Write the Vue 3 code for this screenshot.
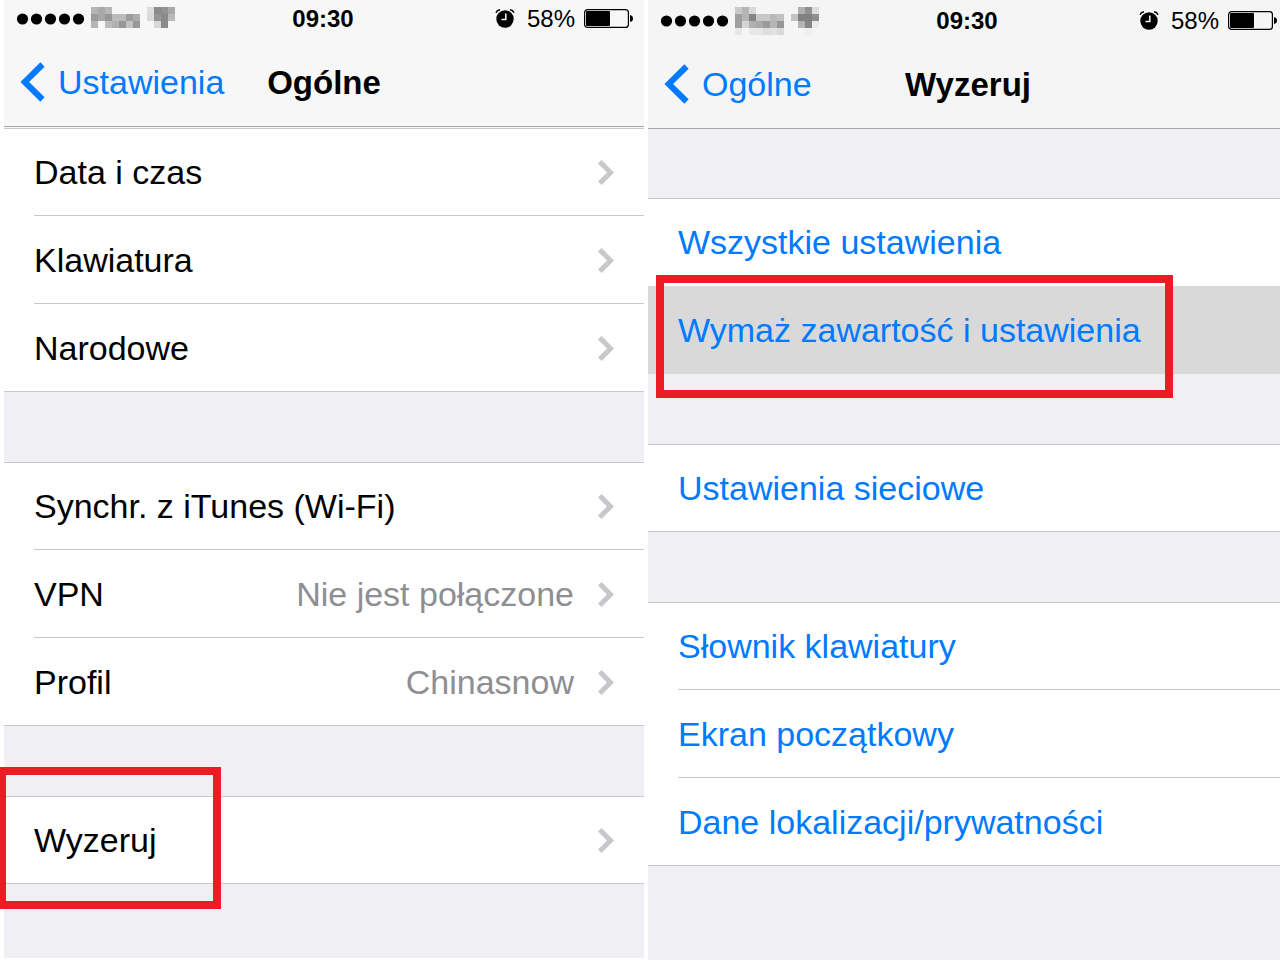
<script setup>
const phones = [
  {
    id: 'general',
    back: 'Ustawienia',
    title: 'Ogólne',
    carrier: [
      ['#b5b5b5', '#a9a9a9', '#b7b7b7', '', '', '', ''],
      ['#9b9b9b', '#a7a7a7', '#979797', '#bbbbbb', '#bbbbbb', '#9d9d9d', '#acacac'],
      ['#b5b5b5', '', '#bdbdbd', '#b0b0b0', '#979797', '#c2c2c2', '#999999'],
    ],
    wifi: [
      ['#dddddd', '#8a8a8a', '#929292', '#a8a8a8'],
      ['#dadada', '#959595', '#8a8a8a', '#b9b9b9'],
      ['', '#d8d8d8', '#8a8a8a', ''],
    ],
    groups: [
      [{ label: 'Data i czas' }, { label: 'Klawiatura' }, { label: 'Narodowe' }],
      [{ label: 'Synchr. z iTunes (Wi-Fi)' }, { label: 'VPN', value: 'Nie jest połączone' }, { label: 'Profil', value: 'Chinasnow' }],
      [{ label: 'Wyzeruj', marked: true }],
    ],
  },
  {
    id: 'reset',
    back: 'Ogólne',
    title: 'Wyzeruj',
    carrier: [
      ['#c8c8c8', '#b5b5b5', '#d8d8d8', '', '', '', ''],
      ['#9f9f9f', '#b5b5b5', '#858585', '#c8c8c8', '#c8c8c8', '#b9b9b9', '#c0c0c0'],
      ['#9f9f9f', '#d5d5d5', '#b0b0b0', '#a9a9a9', '#9c9c9c', '#b5b5b5', '#969696'],
      ['#e8e8e8', '', '#e8e8e8', '#e6e6e6', '#dddddd', '#e2e2e2', '#dadada'],
    ],
    wifi: [
      ['', '#b0b0b0', '#909090', '#dddddd'],
      ['#c3c3c3', '#828282', '#828282', '#8e8e8e'],
      ['', '#b4b4b4', '#858585', '#ebebeb'],
      ['', '', '#efefef', ''],
    ],
    groups: [
      [{ label: 'Wszystkie ustawienia' }, { label: 'Wymaż zawartość i ustawienia', marked: true, pressed: true }],
      [{ label: 'Ustawienia sieciowe' }],
      [{ label: 'Słownik klawiatury' }, { label: 'Ekran początkowy' }, { label: 'Dane lokalizacji/prywatności' }],
    ],
  },
]
</script>

<template>
  <main class="board">
    <section v-for="p in phones" :key="p.id" class="phone" :class="p.id">
      <header class="top">
        <div class="status">
          <div class="signal">
            <svg class="dots" viewBox="0 0 68 12"><circle v-for="i in 5" :key="i" :cx="i * 14 - 7.5" cy="6" r="5.6" /></svg>
            <svg class="carrier" :viewBox="`0 0 7 ${p.carrier.length}`" shape-rendering="crispEdges">
              <template v-for="(row, y) in p.carrier" :key="y">
                <rect v-for="(c, x) in row" :key="x" :x="x" :y="y" width="1" height="1" :fill="c || 'none'" />
              </template>
            </svg>
            <svg class="wifi" :viewBox="`0 0 4 ${p.wifi.length}`" shape-rendering="crispEdges">
              <template v-for="(row, y) in p.wifi" :key="y">
                <rect v-for="(c, x) in row" :key="x" :x="x" :y="y" width="1" height="1" :fill="c || 'none'" />
              </template>
            </svg>
          </div>
          <time class="clock">09:30</time>
          <div class="power">
            <svg class="alarm" viewBox="0 0 20 20">
              <circle cx="10" cy="10" r="8.7" />
              <path d="M1 3.8Q2 1.2 5 0.8M19 3.8Q18 1.2 15 0.8" fill="none" stroke="#000" stroke-width="1.5" />
              <path d="M10.8 4.5V10.5H6.5" fill="none" stroke="#f7f7f7" stroke-width="1.5" />
            </svg>
            <span class="percent">58%</span>
            <svg class="battery" viewBox="0 0 50 20">
              <rect x="0.6" y="0.6" width="43.8" height="17.8" rx="3" fill="none" stroke="#000" stroke-width="1.2" />
              <rect x="2" y="2" width="24" height="15" rx="1" />
              <path d="M46 6Q49 6.5 49 9.5T46 13Z" />
            </svg>
          </div>
        </div>
        <nav class="bar">
          <a class="back" href="#">
            <svg viewBox="0 0 26 42"><path d="M22.5 3.500L4.700 21L22.500 38.500" fill="none" stroke="#007aff" stroke-width="6" /></svg>
            <span>{{ p.back }}</span>
          </a>
          <h1>{{ p.title }}</h1>
        </nav>
      </header>
      <ul v-for="(g, gi) in p.groups" :key="gi" class="group">
        <li v-for="item in g" :key="item.label" :class="{ pressed: item.pressed }">
          <a class="row" href="#">
            <span class="label">{{ item.label }}</span>
            <span v-if="item.value" class="value">{{ item.value }}</span>
            <svg v-if="p.id === 'general'" class="chevron" viewBox="0 0 18 26"><path d="M1.8 2.8L12.500 13.500L1.800 24.200" fill="none" stroke="#c7c7cc" stroke-width="5" /></svg>
          </a>
          <span v-if="item.marked" class="mark"></span>
        </li>
      </ul>
    </section>
  </main>
</template>

<style>
body { margin: 0; background: #fff; }
</style>

<style scoped>
.board {
  display: flex;
  gap: 4px;
  padding-left: 4px;
  min-height: 100vh;
  box-sizing: border-box;
  overflow: hidden;
  background: #fff;
  font-family: "Liberation Sans", Arial, sans-serif;
  color: #000;
}
.phone { flex: 0 0 50vw; box-sizing: border-box; background: #efeff4; }
.general { margin-bottom: 2px; }
.top { background: #f7f7f7; border-bottom: 1px solid #a7a7ac; }
.reset .top { padding-top: 2px; background: #f5f5f5; }
.general .top { box-shadow: 0 1px #f7f7f7; margin-bottom: 1px; }
.status {
  display: grid;
  grid-template-columns: 1fr auto 1fr;
  align-items: center;
  height: 38px;
  padding: 0 10px 0 8px;
}
.signal { display: flex; align-items: center; padding-left: 4px; }
.dots { width: 68px; height: 12px; }
.carrier { width: 49px; margin-left: 7px; }
.wifi { width: 28px; margin-left: 7px; }
.general .carrier, .general .wifi { margin-bottom: 3px; }
.clock { font-size: 24px; font-weight: 700; line-height: 38px; }
.power { display: flex; justify-content: flex-end; align-items: center; }
.alarm { width: 20px; height: 20px; }
.percent { margin: 0 9px 0 12px; font-size: 24px; line-height: 38px; }
.battery { width: 50px; height: 20px; }
.bar {
  display: grid;
  grid-template-columns: 1fr auto 1fr;
  align-items: center;
  height: 88px;
  padding: 0 16px;
}
.back { display: flex; align-items: center; gap: 12px; color: #007aff; font-size: 34px; text-decoration: none; }
.back svg { width: 26px; height: 42px; }
h1 { margin: 0; padding-top: 2px; font-size: 33px; font-weight: 700; }
.group {
  margin: 70px 0 0;
  padding: 0;
  list-style: none;
  background: #fff;
  border-top: 1px solid #c8c7cc;
  border-bottom: 1px solid #c8c7cc;
}
.general .top + .group { margin-top: 0; }
.reset .top + .group { margin-top: 69px; }
li { position: relative; }
.row {
  display: flex;
  align-items: center;
  box-sizing: border-box;
  height: 88px;
  margin-left: 30px;
  padding: 1px 28px 0 0;
  border-bottom: 1px solid #c8c7cc;
  font-size: 34px;
  color: #000;
  text-decoration: none;
}
li:first-child .row { height: 87px; padding-top: 0; }
li:last-child { margin-bottom: -1px; }
li:last-child .row, li:has(+ .pressed) .row { border-bottom-color: transparent; }
.pressed { background: #d9d9d9; }
.reset .row { color: #007aff; }
.label { flex: 1; white-space: nowrap; }
.value { color: #8e8e93; white-space: nowrap; }
.chevron { width: 18px; height: 26px; margin-left: 24px; }
.mark { position: absolute; z-index: 1; pointer-events: none; box-sizing: border-box; border: 8px solid #ed1c24; }
.general .mark { top: -30px; bottom: -25px; left: -6px; width: 223px; }
.reset .mark { top: -11px; bottom: -24px; left: 8px; width: 517px; }
</style>
